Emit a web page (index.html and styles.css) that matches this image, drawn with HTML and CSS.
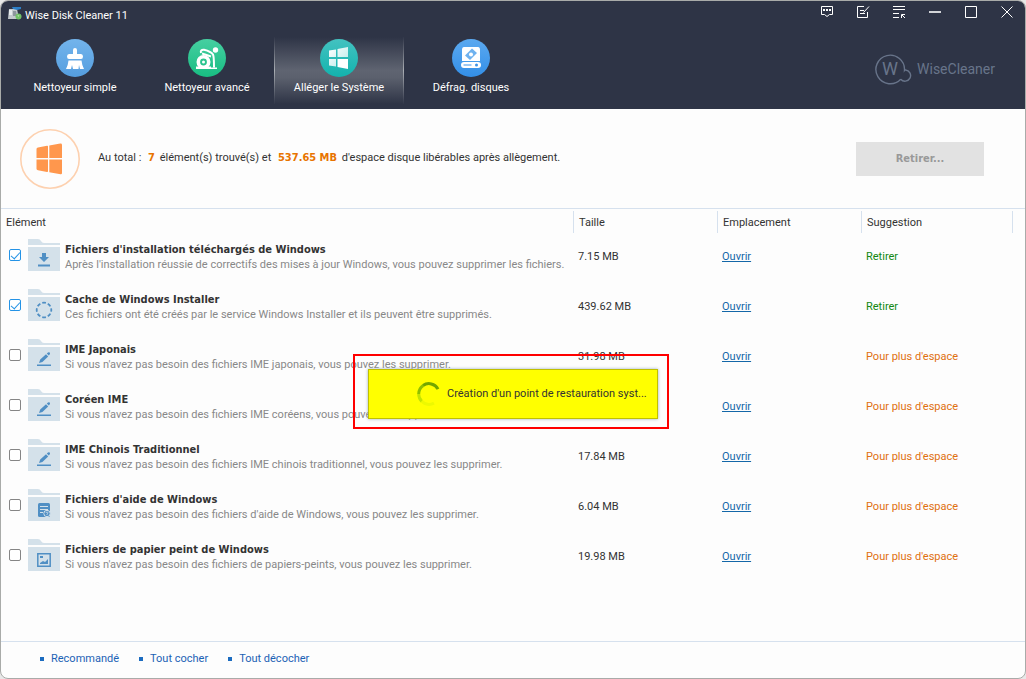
FILE: index.html
```html
<!DOCTYPE html>
<html lang="fr">
<head>
<meta charset="utf-8">
<meta name="viewport" content="width=device-width, initial-scale=1">
<title>Wise Disk Cleaner 11</title>
<link rel="stylesheet" href="styles.css">
</head>
<body>
<svg class="sprite" aria-hidden="true">
  <symbol id="folder" viewBox="0 0 32 32">
    <path fill="#d4e1ea" d="M0 0h10q2 0 3 2t3 2h16v2H0zM0 8h32v24H0z"/>
  </symbol>
  <symbol id="pen" viewBox="0 0 32 32">
    <use href="#folder"/>
    <path fill="#508fc4" d="M9 25.500h14v1.500H9zM11 24l1.200-3.400 5.800-5.300 2.200 2.200-5.800 5.500zM18.800 14.600l1.200-1.100q1-.6 1.700.1t.1 1.700l-1 1.300z"/>
  </symbol>
</svg>
<div class="window">
  <header class="header">
    <div class="titlebar">
      <svg class="app-icon" viewBox="0 0 14 14" aria-hidden="true">
        <path fill="#c3c9cd" d="M1 2h8l2 10H0z"/><path fill="#e6eaec" d="M1 3h3v5H1z"/><path fill="#2d7fc7" d="M4 0h9v2l-4 1-4-1z"/><path fill="#8d979d" d="M5 4h3l1 5H5z"/><circle cx="10.500" cy="9.500" r="3" fill="#72c267"/><path fill="#c8e6c0" d="M9.500 8l2 .700-1.400 1z"/>
      </svg>
      <h1 class="app-title">Wise Disk Cleaner 11</h1>
      <div class="controls">
        <button class="control" aria-label="Commentaires"><svg viewBox="0 0 14 14"><path d="M1.500 1.500h11v8h-3l-2.500 2-2.500-2h-3z"/><path class="solid" d="M3 4h2v2H3zM6 4h2v2H6zM9 4h2v2H9z"/></svg></button>
        <button class="control" aria-label="Notes"><svg viewBox="0 0 14 14"><path d="M8 1.500H1.500v11h10V7M4 5.500h4M4 8.500h5M7.500 7.500l5.500-6"/></svg></button>
        <button class="control" aria-label="Menu"><svg viewBox="0 0 14 14"><path d="M1 1.500h12M1 4.500h12M1 8.500h6M1 12.500h6M9.500 13V9.500H13M10 10l3 3"/></svg></button>
        <button class="control" aria-label="Réduire"><svg viewBox="0 0 14 14"><path stroke-width="2" stroke="#d2d4d8" d="M1 7h12"/></svg></button>
        <button class="control" aria-label="Agrandir"><svg viewBox="0 0 14 14"><path d="M1.500 1.500h11v11h-11z"/></svg></button>
        <button class="control" aria-label="Fermer"><svg viewBox="0 0 14 14"><path d="M1.500 1.500l11 11M12.500 1.500l-11 11"/></svg></button>
      </div>
    </div>
    <div class="toolbar">
      <nav class="tabs">
        <button class="tab">
          <svg viewBox="0 0 38 38" aria-hidden="true"><defs><linearGradient id="g1" x2="0" y2="1"><stop stop-color="#73b4ec"/><stop offset="1" stop-color="#559edf"/></linearGradient></defs><circle cx="19" cy="19" r="19" fill="url(#g1)"/><path fill="#fff" d="M17 15v-4q0-2 2-2t2 2v4h4q2 0 2 2.500T25 20H13q-2 0-2-2.500t2-2.500zM12.500 21.500h13q.5 5 2.500 8.500h-4l-1-4-.5 4H17l-1-4-1 4h-5q2-3.500 2.500-8.500z"/></svg>
          <span>Nettoyeur simple</span>
        </button>
        <button class="tab">
          <svg viewBox="0 0 38 38" aria-hidden="true"><defs><linearGradient id="g2" x2="0" y2="1"><stop stop-color="#46cfa1"/><stop offset="1" stop-color="#18bd82"/></linearGradient></defs><circle cx="19" cy="19" r="19" fill="url(#g2)"/><circle cx="15.500" cy="23" r="5.200" fill="none" stroke="#fff" stroke-width="3.600"/><circle cx="15.500" cy="23" r="1.500" fill="#fff"/><path fill="#fff" d="M8 27.500h15V30H8zM23 28.500h6V30h-6z"/><path fill="none" stroke="#fff" stroke-width="2" d="M13 14q-1-3.500 3-3.200 7 1.700 9 4.700 1 2 1 13M14 14.500l9 3"/><circle cx="27.500" cy="11" r="2.700" fill="#fff"/></svg>
          <span>Nettoyeur avancé</span>
        </button>
        <button class="tab active" aria-current="page">
          <svg viewBox="0 0 38 38" aria-hidden="true"><defs><linearGradient id="g3" x2="0" y2="1"><stop stop-color="#43c2c0"/><stop offset="1" stop-color="#13b3ad"/></linearGradient><linearGradient id="g4" x2="1" y2="1"><stop stop-color="#fff"/><stop offset="1" stop-color="#b6e9e7"/></linearGradient></defs><circle cx="19" cy="19" r="19" fill="url(#g3)"/><path fill="url(#g4)" d="M9 11.500l7-1V18H9zM17.500 10L28 8v10H17.500zM9 20h7v7.500l-7-1z"/><path fill="#fff" d="M17.500 20H28v10l-10.500-2z"/></svg>
          <span>Alléger le Système</span>
        </button>
        <button class="tab">
          <svg viewBox="0 0 38 38" aria-hidden="true"><defs><linearGradient id="g5" x2="0" y2="1"><stop stop-color="#5ba9f0"/><stop offset="1" stop-color="#338fe8"/></linearGradient></defs><circle cx="19" cy="19" r="19" fill="url(#g5)"/><path fill="#fff" d="M12 8h14q2 0 2 3v11H10V11q0-3 2-3zM12 23h14q3 0 3 3t-3 3H12q-3 0-3-3t3-3z"/><path fill="#6fb2ef" d="M20 9.500l5 4.500-7 7-5-4.500z"/><circle cx="19" cy="15.500" r="2" fill="#fff"/><path stroke="#3c93e8" d="M11.500 26h8"/><circle cx="24.500" cy="26" r="1.500" fill="#3c93e8"/></svg>
          <span>Défrag. disques</span>
        </button>
      </nav>
      <div class="brand">
        <svg viewBox="0 0 37 32" aria-hidden="true"><path fill="none" stroke="#68748a" stroke-width="1.400" d="M25.700 26.200A14.300 14.300 0 1 1 29.500 17.300q.2-.3 1-.3a5.600 5.600 0 1 1-4.800 9.200"/><text x="15" y="22" text-anchor="middle">W</text></svg>
        <span>WiseCleaner</span>
      </div>
    </div>
  </header>

  <main class="main">
    <section class="summary">
      <svg class="summary-icon" viewBox="0 0 60 60" aria-hidden="true"><circle cx="30" cy="30" r="29.200" fill="none" stroke="#fdd1b0" stroke-width="1.600"/><path fill="#ff974d" d="M18 18.500l9-1.800q1-.2 1 .8V29H16.500v-9q0-1.200 1.500-1.500zM29.300 16.500l11-1.900q1.700-.2 1.700 1.400v13H29.300zM16.500 30.500H28v11.700q0 1-1 .8l-9-1.800q-1.500-.3-1.500-1.500zM29.300 30.500H42V44q0 1.500-1.500 1.200l-11.200-2z"/></svg>
      <p class="summary-text">Au total : <strong>7</strong> élément(s) trouvé(s) et <strong>537.65 MB</strong> d'espace disque libérables après allègement.</p>
      <button class="remove" disabled>Retirer...</button>
    </section>

    <div class="list">
      <table class="items">
        <colgroup><col><col class="col-data"><col class="col-data"><col class="col-last"><col class="col-end"></colgroup>
        <thead>
          <tr><th scope="col">Elément</th><th scope="col">Taille</th><th scope="col">Emplacement</th><th scope="col">Suggestion</th><td></td></tr>
        </thead>
        <tbody>
          <tr>
            <td><div class="item"><input type="checkbox" id="i1" checked><svg class="folder" viewBox="0 0 32 32" aria-hidden="true"><use href="#folder"/><path fill="#508fc4" d="M14 14h4v4h3l-5 5-5-5h3zM10 25.500h12v2H10z"/></svg><label for="i1"><b>Fichiers d'installation téléchargés de Windows</b><span>Après l'installation réussie de correctifs des mises à jour Windows, vous pouvez supprimer les fichiers.</span></label></div></td>
            <td>7.15 MB</td><td><a href="#">Ouvrir</a></td><td class="safe">Retirer</td><td></td>
          </tr>
          <tr>
            <td><div class="item"><input type="checkbox" id="i2" checked><svg class="folder" viewBox="0 0 32 32" aria-hidden="true"><use href="#folder"/><circle cx="16" cy="21" r="7.300" fill="none" stroke="#508fc4" stroke-width="1.800" stroke-dasharray="3.700 2.034" stroke-dashoffset="2"/></svg><label for="i2"><b>Cache de Windows Installer</b><span>Ces fichiers ont été créés par le service Windows Installer et ils peuvent être supprimés.</span></label></div></td>
            <td>439.62 MB</td><td><a href="#">Ouvrir</a></td><td class="safe">Retirer</td><td></td>
          </tr>
          <tr>
            <td><div class="item"><input type="checkbox" id="i3"><svg class="folder" viewBox="0 0 32 32" aria-hidden="true"><use href="#pen"/></svg><label for="i3"><b>IME Japonais</b><span>Si vous n'avez pas besoin des fichiers IME japonais, vous pouvez les supprimer.</span></label></div></td>
            <td>31.98 MB</td><td><a href="#">Ouvrir</a></td><td class="space">Pour plus d'espace</td><td></td>
          </tr>
          <tr>
            <td><div class="item"><input type="checkbox" id="i4"><svg class="folder" viewBox="0 0 32 32" aria-hidden="true"><use href="#pen"/></svg><label for="i4"><b>Coréen IME</b><span>Si vous n'avez pas besoin des fichiers IME coréens, vous pouvez les supprimer.</span></label></div></td>
            <td></td><td><a href="#">Ouvrir</a></td><td class="space">Pour plus d'espace</td><td></td>
          </tr>
          <tr>
            <td><div class="item"><input type="checkbox" id="i5"><svg class="folder" viewBox="0 0 32 32" aria-hidden="true"><use href="#pen"/></svg><label for="i5"><b>IME Chinois Traditionnel</b><span>Si vous n'avez pas besoin des fichiers IME chinois traditionnel, vous pouvez les supprimer.</span></label></div></td>
            <td>17.84 MB</td><td><a href="#">Ouvrir</a></td><td class="space">Pour plus d'espace</td><td></td>
          </tr>
          <tr>
            <td><div class="item"><input type="checkbox" id="i6"><svg class="folder" viewBox="0 0 32 32" aria-hidden="true"><use href="#folder"/><rect x="10" y="14" width="12" height="14" rx="1.500" fill="#508fc4"/><path stroke="#d4e1ea" d="M12 17.500h8M12 20.500h8M12 23.500h3"/><circle cx="19" cy="24.500" r="3.200" fill="#508fc4" stroke="#d4e1ea"/><path fill="none" stroke="#d4e1ea" stroke-width=".8" d="M18 24q0-1 1-1t1 .8-1 1.300v1"/></svg><label for="i6"><b>Fichiers d'aide de Windows</b><span>Si vous n'avez pas besoin des fichiers d'aide de Windows, vous pouvez les supprimer.</span></label></div></td>
            <td>6.04 MB</td><td><a href="#">Ouvrir</a></td><td class="space">Pour plus d'espace</td><td></td>
          </tr>
          <tr>
            <td><div class="item"><input type="checkbox" id="i7"><svg class="folder" viewBox="0 0 32 32" aria-hidden="true"><use href="#folder"/><path fill="none" stroke="#508fc4" stroke-width="1.500" d="M9.800 14.800h12.400v12.400H9.800z"/><path fill="#508fc4" d="M12 24l3-2 2 1 3-3v5h-8zM12 17h3v2h-3z"/></svg><label for="i7"><b>Fichiers de papier peint de Windows</b><span>Si vous n'avez pas besoin des fichiers de papiers-peints, vous pouvez les supprimer.</span></label></div></td>
            <td>19.98 MB</td><td><a href="#">Ouvrir</a></td><td class="space">Pour plus d'espace</td><td></td>
          </tr>
        </tbody>
      </table>
    </div>

    <footer class="footer">
      <a href="#">Recommandé</a><a href="#">Tout cocher</a><a href="#">Tout décocher</a>
    </footer>

    <div class="highlight">
      <div class="progress" role="status">
        <svg viewBox="0 0 24 24" aria-hidden="true"><g fill="none" stroke-width="3"><path stroke="#72a600" d="M6 3.500A10.300 10.300 0 0 1 21 7.100"/><path stroke="#8fbf00" d="M1.700 12A10.300 10.300 0 0 1 6.200 3.400"/><path stroke="#c4e300" d="M4.800 19.400A10.300 10.300 0 0 1 1.700 12"/><path stroke="#edf900" d="M17 21.100A10.300 10.300 0 0 1 4.800 19.400"/></g></svg>
        <span>Création d'un point de restauration syst...</span>
      </div>
    </div>
  </main>
</div>
</body>
</html>
```
FILE: styles.css
```css
* { box-sizing: border-box; }
body {
  margin: 0;
  background: #e8e8e8;
  color: #333;
  font: 11px/16px Roboto, "Noto Sans", sans-serif;
}
button { border: 0; padding: 0; background: none; color: inherit; font: inherit; }
b, strong, .remove { font-family: "DejaVu Sans Condensed", "DejaVu Sans", sans-serif; }
a { color: #1467a8; }
.sprite { position: absolute; width: 0; height: 0; }

.window {
  display: flex;
  flex-direction: column;
  min-height: 100vh;
  border: 1px solid #a9aba9;
  border-radius: 8px;
  overflow: hidden;
  background: #fdfdfd;
}

.header { background: #2e3446; color: #fff; padding-bottom: 5px; }
.titlebar { display: flex; align-items: flex-start; height: 36px; padding-left: 7px; }
.app-icon { width: 14px; height: 14px; margin-top: 6px; }
.app-title { margin: 7px 0 0 3px; font-size: 11px; line-height: 16px; font-weight: normal; }
.controls { display: flex; margin-left: auto; }
.control { display: grid; place-items: center; width: 36px; height: 22px; }
.control svg { width: 14px; height: 14px; fill: none; stroke: #fff; }
.control .solid { fill: #fff; stroke: none; }

.toolbar { display: flex; justify-content: space-between; padding: 0 30px 0 9px; }
.tabs { display: flex; gap: 2px; }
.tab {
  display: flex;
  flex-direction: column;
  align-items: center;
  gap: 3px;
  width: 130px;
  height: 67px;
  padding-top: 2px;
  border: solid transparent;
  border-width: 0 1px;
}
.tab svg { width: 38px; height: 38px; }
.tab.active {
  background: linear-gradient(#2e3446, #5f6471 50%, #5c616e 60%, #2e3446);
  border-image: linear-gradient(#2e3446, #a9adb3 50%, #2e3446) 1;
}
.brand { display: flex; align-items: center; gap: 5px; padding-bottom: 4px; color: #68748a; font: 14px/20px Roboto, sans-serif; }
.brand svg { width: 37px; height: 32px; }
.brand text { fill: #68748a; font-size: 18px; }

.main { position: relative; display: flex; flex-direction: column; flex: 1; }
.summary { display: flex; align-items: center; height: 100px; padding: 0 41px 0 19px; border-bottom: 1px solid #d6e1ee; }
.summary-icon { width: 60px; height: 60px; }
.summary-text { margin: 0 auto 2px 18px; }
.summary-text strong { margin: 0 2px 0 4px; color: #e87400; }
.remove { width: 128px; height: 34px; background: #e2e2e2; color: #999; font-weight: bold; }

.list { flex: 1; }
.items { width: 100%; table-layout: fixed; border-collapse: separate; border-spacing: 0 2px; margin-bottom: 8px; }
.col-data { width: 144px; }
.col-last { width: 151px; }
.col-end { width: 13px; }
.items thead th, .items thead td { height: 22px; padding: 2px 0 0 5px; text-align: left; font-weight: normal; }
.items thead * + * { border-left: 1px solid #d6e1ee; padding-left: 4px; }
.items tbody td { height: 48px; padding: 14px 0 0 5px; vertical-align: top; }
.items tbody td:first-child { padding: 4px 0 0 8px; }
.item { display: flex; }
.item label { padding: 3px 0 0 5px; white-space: nowrap; }
.item b, .item span { display: block; line-height: 15px; }
.item span { color: #888; }
.folder { width: 32px; height: 32px; flex: none; }
.item input {
  appearance: none;
  flex: none;
  width: 12px;
  height: 12px;
  margin: 10px 7px 0 0;
  border: 1px solid #858585;
  border-radius: 2px;
  background: #fff;
}
.item input:checked { display: grid; place-items: center; border-color: #2493e6; }
.item input:checked::before {
  content: "";
  width: 8px;
  height: 4px;
  margin-bottom: 2px;
  border: solid #2493e6;
  border-width: 0 0 1px 1px;
  rotate: -48deg;
}
.safe { color: #128812; }
.space { color: #e07010; }

.footer { display: flex; align-items: center; gap: 20px; height: 37px; padding: 0 39px 3px; border-top: 1px solid #d6e1ee; }
.footer a { display: flex; align-items: center; gap: 7px; color: #1c62b5; text-decoration: none; }
.footer a::before { content: ""; width: 4px; height: 4px; background: #1c6cc0; }

.highlight {
  position: absolute;
  top: calc(50% - 40px);
  left: calc(50% - 160px);
  padding: 13px 9px 8px 13px;
  border: 2px solid #f00;
}
.progress {
  display: flex;
  align-items: center;
  gap: 6px;
  width: 290px;
  height: 50px;
  padding-left: 48px;
  border: 1px solid #c0c000;
  background: #ff0;
  box-shadow: 0 0 3px #9ab;
  white-space: nowrap;
}
.progress svg { width: 24px; height: 24px; }
```
